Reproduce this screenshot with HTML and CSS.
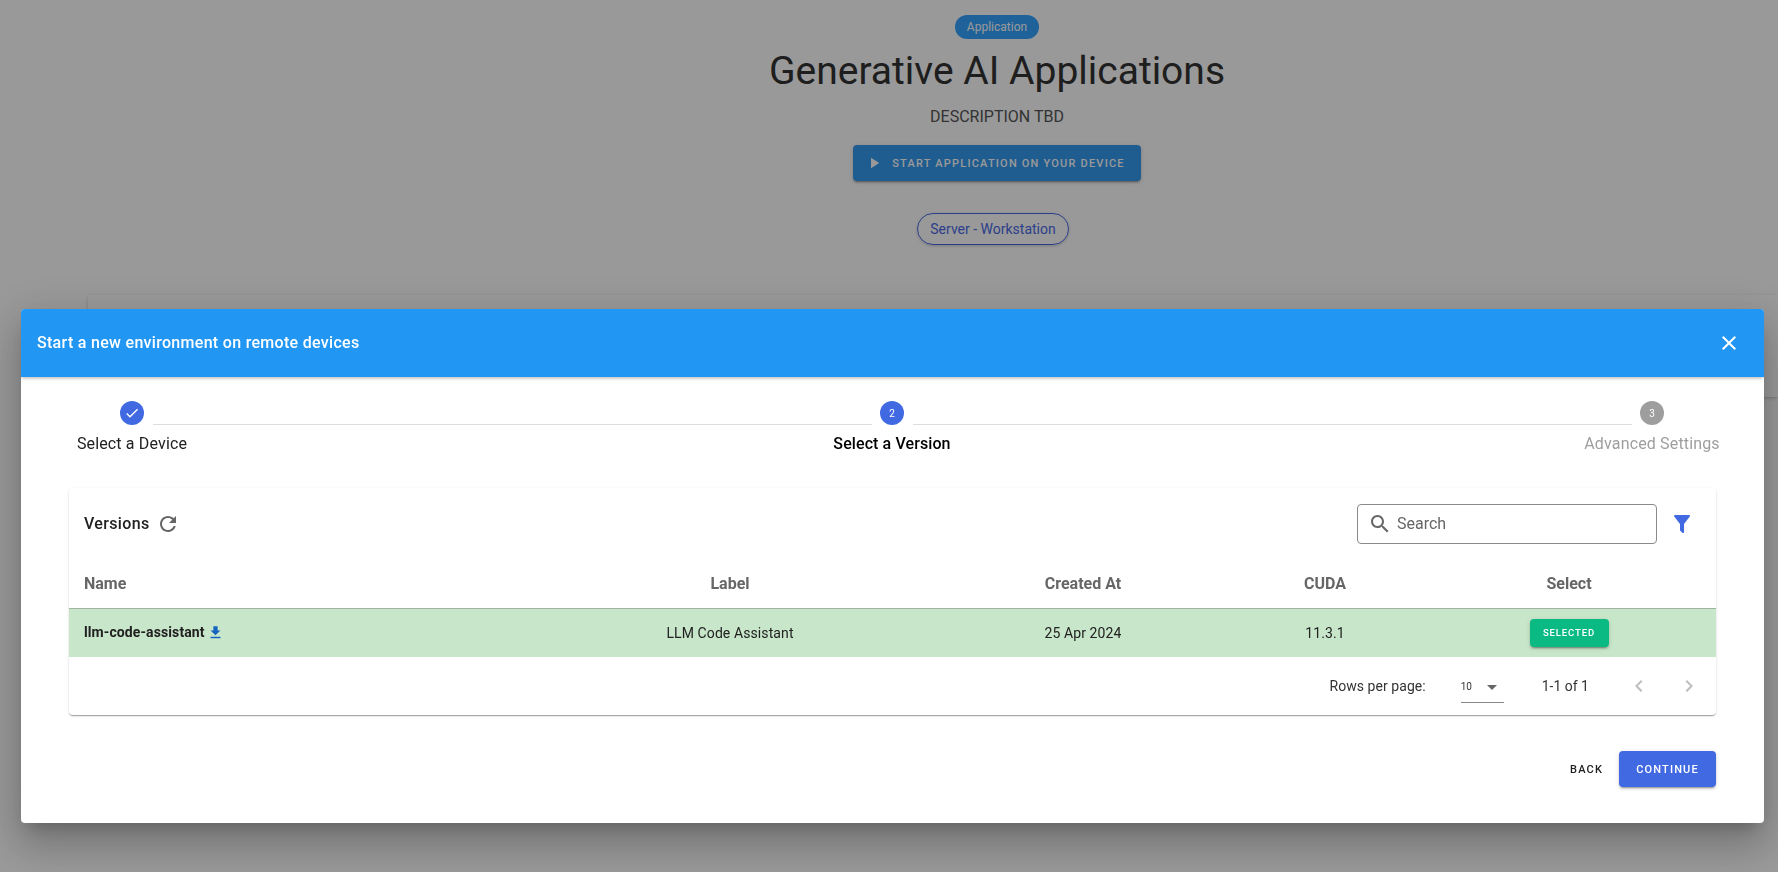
FILE: index.html
```html
<!DOCTYPE html>
<html lang="en">
<head>
    <meta charset="UTF-8">
    <title>Generative AI Applications</title>
    <link rel="stylesheet" href="styles.css">
</head>
<body>
<div class="page">
    <div class="hero">
        <span class="app-chip">Application</span>
        <h1 class="hero-title">Generative AI Applications</h1>
        <p class="hero-desc">DESCRIPTION TBD</p>
        <button class="start-btn">
            <svg class="start-icon" viewBox="0 0 24 24"><path d="M8 5v14l11-7z"/></svg>
            START APPLICATION ON YOUR DEVICE
        </button>
        <span class="server-chip">Server - Workstation</span>
    </div>
    <div class="page-card"></div>
</div>

<div class="overlay">
    <div class="dialog">
        <div class="dialog-header">
            <span class="dialog-title">Start a new environment on remote devices</span>
            <svg class="close-icon" viewBox="0 0 24 24"><path d="M19 6.41 17.59 5 12 10.59 6.41 5 5 6.41 10.59 12 5 17.59 6.41 19 12 13.41 17.59 19 19 17.59 13.41 12z"/></svg>
        </div>
        <div class="dialog-body">
            <div class="stepper">
                <div class="step">
                    <span class="step-circle">
                        <svg class="check-icon" viewBox="0 0 24 24"><path d="M9 16.17 4.83 12l-1.42 1.41L9 19 21 7l-1.41-1.41z"/></svg>
                    </span>
                    <span class="step-label">Select a Device</span>
                </div>
                <div class="step-line"></div>
                <div class="step">
                    <span class="step-circle">2</span>
                    <span class="step-label step-active">Select a Version</span>
                </div>
                <div class="step-line"></div>
                <div class="step">
                    <span class="step-circle step-circle-off">3</span>
                    <span class="step-label step-off">Advanced Settings</span>
                </div>
            </div>

            <div class="card">
                <div class="toolbar">
                    <span class="toolbar-title">Versions</span>
                    <svg class="refresh-icon" viewBox="0 0 24 24"><path d="M17.65 6.35C16.2 4.9 14.21 4 12 4c-4.42 0-7.99 3.58-7.99 8s3.57 8 7.99 8c3.73 0 6.84-2.55 7.73-6h-2.08c-.82 2.33-3.04 4-5.65 4-3.31 0-6-2.69-6-6s2.69-6 6-6c1.66 0 3.14.69 4.22 1.78L13 11h7V4l-2.35 2.35z"/></svg>
                    <div class="search">
                        <svg class="search-icon" viewBox="0 0 24 24"><path d="M15.5 14h-.79l-.28-.27C15.41 12.59 16 11.11 16 9.5 16 5.91 13.09 3 9.5 3S3 5.91 3 9.5 5.91 16 9.5 16c1.61 0 3.09-.59 4.23-1.57l.27.28v.79l5 4.99L20.49 19l-4.99-5zm-6 0C7.01 14 5 11.99 5 9.5S7.01 5 9.5 5 14 7.01 14 9.5 11.99 14 9.5 14z"/></svg>
                        <span class="search-text">Search</span>
                    </div>
                    <svg class="filter-icon" viewBox="0 0 24 24"><path d="M14 12v7.88c.04.3-.06.62-.29.83-.39.39-1.02.39-1.41 0l-2.01-2.01c-.23-.23-.33-.54-.29-.82V12h-.03L4.21 4.62c-.34-.43-.26-1.06.17-1.4C4.57 3.08 4.78 3 5 3h14c.22 0 .43.08.62.22.43.34.51.97.17 1.4L14.03 12H14z"/></svg>
                </div>

                <table class="versions">
                    <colgroup>
                        <col class="col-name">
                        <col class="col-label">
                        <col class="col-created">
                        <col class="col-cuda">
                        <col class="col-select">
                    </colgroup>
                    <thead>
                        <tr>
                            <th class="cell-left">Name</th>
                            <th>Label</th>
                            <th>Created At</th>
                            <th>CUDA</th>
                            <th>Select</th>
                        </tr>
                    </thead>
                    <tbody>
                        <tr class="row-selected">
                            <td class="cell-left">
                                <span class="version-name">llm-code-assistant</span>
                                <svg class="download-icon" viewBox="0 0 24 24"><path d="M5 20h14v-2H5v2zM19 9h-4V3H9v6H5l7 7 7-7z"/></svg>
                            </td>
                            <td>LLM Code Assistant</td>
                            <td>25 Apr 2024</td>
                            <td>11.3.1</td>
                            <td><button class="selected-btn">SELECTED</button></td>
                        </tr>
                    </tbody>
                </table>

                <div class="pagination">
                    <span class="rows-label">Rows per page:</span>
                    <div class="rows-select">
                        <span>10</span>
                        <svg class="arrow-icon" viewBox="0 0 24 24"><path d="M7 10l5 5 5-5z"/></svg>
                    </div>
                    <span class="page-range">1-1 of 1</span>
                    <svg class="page-icon" viewBox="0 0 24 24"><path d="M15.41 7.41 14 6l-6 6 6 6 1.41-1.41L10.83 12z"/></svg>
                    <svg class="page-icon" viewBox="0 0 24 24"><path d="M10 6 8.59 7.41 13.17 12l-4.58 4.59L10 18l6-6z"/></svg>
                </div>
            </div>

            <div class="actions">
                <button class="back-btn">BACK</button>
                <button class="continue-btn">CONTINUE</button>
            </div>
        </div>
    </div>
</div>
</body>
</html>
```

FILE: styles.css
```css
* {
    padding: 0;
    margin: 0;
    box-sizing: border-box;
}

html, body {
    width: 100%;
    height: 100%;
    overflow: hidden;
    background-color: #fff;
    font-family: Roboto, "Liberation Sans", sans-serif;
}

button {
    border: none;
    font-family: inherit;
}

svg {
    display: block;
    fill: currentColor;
    flex: none;
}

/* page behind the dialog */
.page {
    height: 100%;
    padding-left: 88px;
}

.hero {
    display: flex;
    flex-direction: column;
    align-items: center;
    padding: 15px 0 0 128px;
    height: 295px;
}

.app-chip {
    height: 24px;
    line-height: 24px;
    padding: 0 12px;
    border-radius: 12px;
    background-color: #34a4ff;
    color: #fff;
    font-size: 12px;
}

.hero-title {
    margin-top: 8px;
    font-size: 39px;
    line-height: 48px;
    font-weight: 400;
    color: #333;
}

.hero-desc {
    margin-top: 10px;
    font-size: 16px;
    line-height: 24px;
    color: #555;
}

.start-btn {
    display: flex;
    align-items: center;
    height: 36px;
    margin-top: 16px;
    padding: 0 16px 0 12px;
    gap: 9px;
    border-radius: 4px;
    background-color: #3499f0;
    color: #fff;
    font-size: 11px;
    font-weight: 500;
    letter-spacing: 1.2px;
    box-shadow: 0 3px 1px -2px rgba(0,0,0,.2), 0 2px 2px 0 rgba(0,0,0,.14), 0 1px 5px 0 rgba(0,0,0,.12);
}

.start-icon {
    width: 18px;
    height: 18px;
}

.server-chip {
    height: 32px;
    line-height: 30px;
    margin: 32px 8px 0 0;
    padding: 0 12px;
    border: 1px solid #4a6ae6;
    border-radius: 16px;
    color: #4a6ae6;
    font-size: 14px;
    box-shadow: 0 1px 3px rgba(0,0,0,.2);
}

.page-card {
    height: 102px;
    background-color: #fff;
    box-shadow: 0 2px 4px -1px rgba(0,0,0,.2), 0 0 3px rgba(0,0,0,.08);
}

/* dialog */
.overlay {
    position: fixed;
    top: 0;
    left: 0;
    width: 100%;
    height: 100%;
    padding: 309px 14px 0 21px;
    background-color: rgba(0,0,0,.4);
}

.dialog {
    height: 514px;
    border-radius: 4px;
    background-color: #fff;
    overflow: hidden;
    box-shadow: 0 11px 15px -7px rgba(0,0,0,.2), 0 24px 38px 3px rgba(0,0,0,.14), 0 9px 46px 8px rgba(0,0,0,.12);
}

.dialog-header {
    position: relative;
    display: flex;
    align-items: center;
    justify-content: space-between;
    height: 68px;
    padding: 0 23px 0 16px;
    background-color: #2196f3;
    color: #fff;
    box-shadow: 0 2px 4px -1px rgba(0,0,0,.2), 0 1px 3px rgba(0,0,0,.12);
}

.dialog-title {
    margin-bottom: 2px;
    font-size: 16px;
    font-weight: 500;
    letter-spacing: .3px;
}

.close-icon {
    width: 24px;
    height: 24px;
}

.dialog-body {
    padding: 24px 48px 0;
}

/* stepper */
.stepper {
    display: flex;
    align-items: flex-start;
    padding: 0 52px 0 51px;
}

.step {
    display: flex;
    flex-direction: column;
    align-items: center;
    width: 24px;
    flex: none;
}

.step-circle {
    display: flex;
    align-items: center;
    justify-content: center;
    width: 24px;
    height: 24px;
    border-radius: 50%;
    background-color: #4169e1;
    color: #fff;
    font-size: 10px;
}

.step-circle-off {
    background-color: #9e9e9e;
}

.check-icon {
    width: 16px;
    height: 16px;
}

.step-label {
    flex: none;
    margin-top: 9px;
    white-space: nowrap;
    font-size: 16px;
    line-height: 19px;
    font-weight: 400;
    letter-spacing: .15px;
    color: #212121;
}

.step-active {
    font-weight: 500;
    letter-spacing: .1px;
    color: #000;
}

.step-off {
    color: #9e9e9e;
}

.step-line {
    flex: 1;
    height: 1px;
    margin: 23px 8px 0 9px;
    background-color: #ddd;
}

/* versions card */
.card {
    margin-top: 35px;
    height: 227px;
    border-radius: 4px;
    background-color: #fff;
    box-shadow: 0 2px 1px -1px rgba(0,0,0,.2), 0 1px 1px 0 rgba(0,0,0,.14), 0 1px 3px 0 rgba(0,0,0,.12);
}

.toolbar {
    display: flex;
    align-items: center;
    height: 72px;
    padding: 0 22px 0 15px;
}

.toolbar-title {
    margin-bottom: 1px;
    font-size: 16px;
    font-weight: 500;
    letter-spacing: .35px;
    color: #212121;
}

.refresh-icon {
    width: 24px;
    height: 24px;
    margin-left: 6px;
    color: #666;
}

.search {
    display: flex;
    align-items: center;
    width: 300px;
    height: 40px;
    margin-left: auto;
    padding-left: 10px;
    border: 1px solid #8a8a8a;
    border-radius: 4px;
}

.search-icon {
    width: 24px;
    height: 24px;
    color: #666;
}

.search-text {
    margin-left: 5px;
    margin-bottom: 1px;
    font-size: 16px;
    color: #666;
}

.filter-icon {
    width: 24px;
    height: 24px;
    margin-left: 13px;
    color: #4169e1;
}

.versions {
    width: 100%;
    table-layout: fixed;
    border-collapse: collapse;
}

.col-name { width: 453px; }
.col-label { width: 416px; }
.col-created { width: 290px; }
.col-cuda { width: 194px; }
.col-select { width: 294px; }

.versions th {
    height: 48px;
    text-align: center;
    font-size: 16px;
    font-weight: 700;
    color: #666;
}

.versions td {
    height: 49px;
    text-align: center;
    font-size: 14px;
    letter-spacing: .1px;
    color: #212121;
}

.versions .cell-left {
    text-align: left;
    padding-left: 15px;
}

.row-selected {
    background-color: #c8e6c9;
    border-top: 1px solid #9fb4a0;
}

.version-name {
    font-weight: 700;
}

.download-icon {
    display: inline-block;
    vertical-align: -4px;
    width: 17px;
    height: 17px;
    margin-left: -1px;
    color: #1565c0;
}

.selected-btn {
    display: block;
    width: 79px;
    height: 28px;
    margin: 0 auto;
    border-radius: 4px;
    background-color: #0bba83;
    color: #fff;
    font-size: 9.5px;
    font-weight: 500;
    letter-spacing: .9px;
    box-shadow: 0 3px 1px -2px rgba(0,0,0,.2), 0 2px 2px 0 rgba(0,0,0,.14), 0 1px 5px 0 rgba(0,0,0,.12);
}

.pagination {
    display: flex;
    align-items: center;
    justify-content: flex-end;
    height: 58px;
    padding-right: 15px;
    font-size: 14px;
    color: #333;
}

.rows-label {
    letter-spacing: .05px;
}

.rows-select {
    display: flex;
    align-items: center;
    justify-content: space-between;
    width: 43px;
    height: 32px;
    margin-left: 35px;
    margin-top: 2px;
    border-bottom: 1px solid #888;
    font-size: 10px;
}

.arrow-icon {
    width: 24px;
    height: 24px;
    color: #666;
}

.page-range {
    margin-left: 38px;
}

.page-icon {
    width: 24px;
    height: 24px;
    margin-left: 26px;
    color: #bdbdbd;
}

.page-range + .page-icon {
    margin-left: 38px;
}

.actions {
    display: flex;
    align-items: center;
    justify-content: flex-end;
    margin-top: 36px;
    gap: 16px;
}

.back-btn {
    background: none;
    color: #212121;
    font-size: 11px;
    font-weight: 500;
    letter-spacing: 1.15px;
}

.continue-btn {
    width: 97px;
    height: 36px;
    border-radius: 4px;
    background-color: #4169e1;
    color: #fff;
    font-size: 11px;
    font-weight: 500;
    letter-spacing: 1.15px;
    box-shadow: 0 3px 1px -2px rgba(0,0,0,.2), 0 2px 2px 0 rgba(0,0,0,.14), 0 1px 5px 0 rgba(0,0,0,.12);
}
```
